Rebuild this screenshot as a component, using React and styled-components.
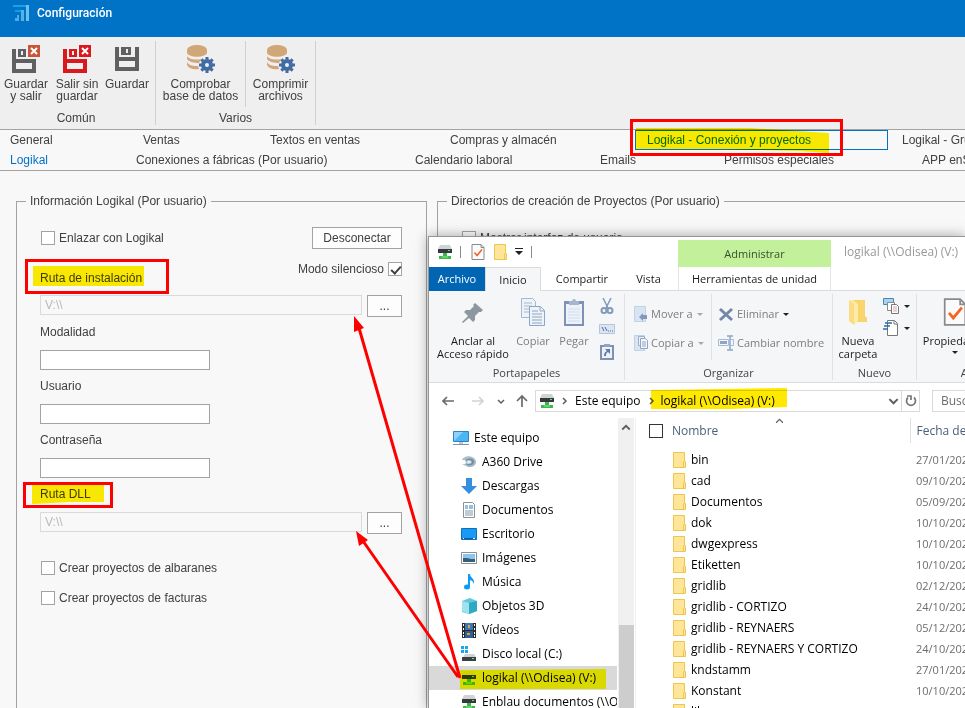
import React from "react";
import styled, { createGlobalStyle, css } from "styled-components";

const Global = createGlobalStyle`
  * { box-sizing: border-box; }
  html, body, #root { height: 100%; }
  body { margin: 0; overflow: hidden; }
  button, input { font: inherit; color: inherit; margin: 0; padding: 0; border-radius: 0; }
  button { background: none; border: 0; cursor: pointer; }
  svg { display: block; flex: none; }
`;

const appFont = `"Liberation Sans", Arial, sans-serif`;
const shellFont = `"Open Sans", "Segoe UI", sans-serif`;

/* ---------- Configuration window ---------- */

const Screen = styled.div`
  position: relative;
  height: 100vh;
  overflow: hidden;
  display: flex;
  flex-direction: column;
  background: #f8f8f8;
  color: #404040;
  font: 12px/16px ${appFont};
`;

const TitleBar = styled.header`
  flex: none;
  height: 37px;
  padding: 5px 13px;
  display: flex;
  align-items: flex-start;
  gap: 8px;
  background: #0173c7;
  color: #fff;
`;

const WindowTitle = styled.h1`
  margin: 0;
  font: 500 12px/16px Roboto, ${appFont};
`;

const Ribbon = styled.div`
  flex: none;
  height: 93px;
  padding: 4px 0;
  display: flex;
  background: #efefef;
  border-bottom: 1px solid #a3a3a3;
`;

const RibbonGroup = styled.section`
  display: flex;
  flex-direction: column;
  justify-content: space-between;
  padding-right: ${(p) => p.$end || 0}px;
  border-right: 1px solid #d0d0d0;
`;

const RibbonButtons = styled.div`
  display: flex;
  height: 66px;
`;

const RibbonButton = styled.button`
  width: ${(p) => p.$width}px;
  padding-top: 4px;
  display: flex;
  flex-direction: column;
  align-items: center;
  gap: 5px;
  line-height: 12px;
  white-space: pre;
  border-right: ${(p) => (p.$divided ? "1px solid #d0d0d0" : "0")};
`;

const RibbonCaption = styled.div`
  text-align: center;
  line-height: 14px;
`;

const TabStrip = styled.nav`
  flex: none;
  height: 41px;
  border-bottom: 1px solid #a3a3a3;
`;

const TabLine = styled.div`
  display: flex;
  height: 20px;
  padding-left: 10px;
`;

const Tab = styled.button`
  flex: none;
  width: ${(p) => p.$width}px;
  text-align: left;
  white-space: nowrap;
  ${(p) => p.$current && css`color: #0173c7;`}
  ${(p) => p.$focused && css`
    color: #0173c7;
    border: 1px solid #0173c7;
    padding-left: 11px;
    margin-right: 14px;
  `}
`;

const Body = styled.main`
  flex: 1;
  min-height: 0;
  display: flex;
  gap: 10px;
  padding: 22px 0 0 16px;
`;

const Group = styled.fieldset`
  flex: ${(p) => (p.$wide ? "1 0 528px" : "0 0 411px")};
  min-width: 0;
  margin: 0;
  padding: 0 9px;
  border: 1px solid #a3a3a3;
  border-bottom: 0;
  ${(p) => p.$wide && css`border-right: 0;`}
`;

const Legend = styled.legend`
  padding: 0 4px;
`;

const Form = styled.div`
  padding: 18px 15px 0 14px;
  display: flex;
  flex-direction: column;
`;

const Row = styled.div`
  display: flex;
  justify-content: space-between;
  align-items: center;
  height: 22px;
`;

const PathHeading = styled.div`
  display: flex;
  justify-content: space-between;
  align-items: center;
  height: 34px;
  margin-top: 12px;
`;

const CheckLabel = styled.label`
  display: flex;
  align-items: center;
  gap: 4px;
  padding-left: 1px;
  ${(p) => p.$top && css`align-self: flex-start;`}
`;

const CheckBox = styled.input.attrs({ type: "checkbox" })`
  appearance: none;
  position: relative;
  flex: none;
  width: 14px;
  height: 14px;
  border: 1px solid #a3a3a3;
  background: #fff;
  &:checked::after {
    content: "";
    position: absolute;
    left: 4px;
    top: 1px;
    width: 4px;
    height: 8px;
    border: solid #404040;
    border-width: 0 2px 2px 0;
    transform: rotate(42deg);
  }
`;

const PushButton = styled.button`
  width: ${(p) => p.$width}px;
  height: 22px;
  border: 1px solid #a3a3a3;
  background: #fdfdfd;
`;

const PathRow = styled.div`
  display: flex;
  align-items: flex-start;
  gap: 5px;
  height: 21px;
`;

const TextInput = styled.input`
  width: 170px;
  height: 20px;
  padding: 0 4px;
  border: 1px solid #a3a3a3;
  background: #fff;
`;

const PathInput = styled(TextInput)`
  flex: 1;
  min-width: 0;
  border-color: #dadada;
  background: #f8f8f8;
  color: #b9b9b9;
`;

const FieldLabel = styled.label`
  margin: 8px 0 10px;
`;

const Options = styled.div`
  display: flex;
  flex-direction: column;
  gap: 14px;
  margin-top: 27px;
`;

/* ---------- File explorer window ---------- */

const Explorer = styled.section`
  position: absolute;
  left: 428px;
  top: 236px;
  right: 0;
  bottom: 0;
  overflow: hidden;
  display: flex;
  flex-direction: column;
  background: #fff;
  color: #1b1b1b;
  border: solid #959595;
  border-width: 1px 0 0 1px;
  box-shadow: 0 0 12px rgba(0, 0, 0, 0.35);
  font: 12px/16px ${shellFont};
  white-space: nowrap;
`;

const ExplorerHead = styled.div`
  flex: none;
  display: flex;
  height: 54px;
  border-bottom: 1px solid #dadbdc;
`;

const HeadLeft = styled.div`
  flex: none;
  width: 249px;
`;

const QuickBar = styled.div`
  display: flex;
  align-items: center;
  height: 30px;
  padding-left: 8px;
`;

const QuickButton = styled.button`
  display: grid;
  place-items: center;
  width: ${(p) => p.$width || 16}px;
`;

const QuickLine = styled.span`
  width: 1px;
  height: 12px;
  margin: 0 ${(p) => p.$gap}px;
  background: #8c8c8c;
`;

const ShellTabs = styled.div`
  display: flex;
  height: 24px;
  font-size: 11px;
`;

const ShellTab = styled.button`
  width: ${(p) => p.$width}px;
  height: 24px;
  ${(p) => p.$kind === "file" && css`background: #0066b4; color: #fff;`}
  ${(p) => p.$kind === "open" && css`
    background: #f5f6f7;
    border: 1px solid #dadbdc;
    border-bottom: 0;
  `}
`;

const Contextual = styled.div`
  flex: none;
  width: 153px;
  padding-top: 3px;
  text-align: center;
  font-size: 11px;
`;

const ContextTitle = styled.div`
  height: 27px;
  line-height: 28px;
  background: #c3f09b;
  color: #37502b;
`;

const ContextTab = styled.button`
  width: 100%;
  height: 23px;
  border: 1px solid #e4e4e4;
  border-width: 0 1px;
`;

const ExplorerTitle = styled.div`
  padding: 7px 13px;
  color: #999;
`;

const Tools = styled.div`
  flex: none;
  display: flex;
  height: 92px;
  background: #f5f6f7;
  border-bottom: 1px solid #dadbdc;
  font-size: 11px;
`;

const ToolGroup = styled.section`
  flex: none;
  width: ${(p) => p.$width}px;
  margin: 3px 0 2px;
  display: flex;
  flex-direction: column;
  justify-content: space-between;
  border-right: 1px solid #e0e1e2;
`;

const ToolBody = styled.div`
  display: flex;
  height: 66px;
`;

const ToolCaption = styled.div`
  text-align: center;
  line-height: 14px;
  color: #444;
`;

const BigTool = styled.button`
  flex: none;
  width: ${(p) => p.$width}px;
  padding-top: 4px;
  display: flex;
  flex-direction: column;
  align-items: center;
  gap: 8px;
  line-height: 13px;
  white-space: pre;
  color: ${(p) => (p.$dim ? "#7d7d7d" : "#1b1b1b")};
`;

const CaretLabel = styled.span`
  display: flex;
  flex-direction: column;
  align-items: center;
  gap: 1px;
`;

const SmallStack = styled.div`
  display: flex;
  flex-direction: column;
  gap: ${(p) => p.$gap}px;
  padding: ${(p) => p.$pad};
  ${(p) => p.$width && css`
    width: ${p.$width}px;
    border-right: 1px solid #e0e1e2;
  `}
`;

const SmallTool = styled.button`
  display: flex;
  align-items: center;
  gap: 3px;
  height: 16px;
  color: #7d7d7d;
`;

const NavBar = styled.div`
  flex: none;
  display: flex;
  align-items: center;
  height: 35px;
  padding-left: 12px;
`;

const NavButton = styled.button`
  flex: none;
  display: grid;
  place-items: center;
  width: ${(p) => p.$width}px;
  height: 22px;
  margin-left: ${(p) => p.$gap || 0}px;
`;

const Address = styled.div`
  flex: 0 0 385px;
  height: 22px;
  margin-left: 5px;
  padding-left: 3px;
  display: flex;
  align-items: center;
  border: 1px solid #d9d9d9;
  color: #000;
`;

const Crumb = styled.button`
  padding: 0 3px;
`;

const Refresh = styled(NavButton)`
  border-left: 1px solid #d9d9d9;
`;

const Spacer = styled.span`
  flex: 1;
`;

const Search = styled.input`
  flex: 0 0 160px;
  height: 22px;
  margin-left: 12px;
  padding: 0 8px;
  border: 1px solid #d9d9d9;
  &::placeholder { color: #6d6d6d; opacity: 1; }
`;

const Panes = styled.div`
  flex: 1;
  min-height: 0;
  display: flex;
`;

const Tree = styled.ul`
  flex: 0 0 188px;
  margin: 0;
  padding: 8px 0 0;
  list-style: none;
  overflow: hidden;
  color: #000;
`;

const TreeItem = styled.li`
  display: flex;
  align-items: center;
  gap: 5px;
  height: 24px;
  padding-left: ${(p) => (p.$root ? 24 : 32)}px;
  background: ${(p) => (p.$selected ? "#d9d9d9" : "transparent")};
`;

const ScrollTrack = styled.div`
  flex: 0 0 16px;
  margin-left: 1px;
  display: flex;
  flex-direction: column;
  align-items: center;
  justify-content: space-between;
  padding-top: 4px;
  background: #f0f0f0;
`;

const ScrollThumb = styled.div`
  width: 15px;
  height: 83px;
  background: #cdcdcd;
`;

const Listing = styled.div`
  position: relative;
  flex: 1;
  min-width: 0;
  margin-left: 1px;
  overflow: hidden;
  border-left: 1px solid #f0f0f0;
`;

const FileTable = styled.table`
  width: 480px;
  table-layout: fixed;
  border-collapse: collapse;
  text-align: left;
`;

const HeadCell = styled.th`
  width: ${(p) => p.$width}px;
  height: 25px;
  padding: 0 0 0 ${(p) => p.$pad}px;
  font-weight: 400;
  color: #4c607a;
  ${(p) => p.$line && css`border-right: 1px solid #e0e0e0;`}
`;

const NameHead = styled.div`
  display: flex;
  align-items: center;
  gap: 9px;
`;

const SelectAll = styled(CheckBox)`
  border-color: #333;
`;

const SortMark = styled.span`
  position: absolute;
  left: 139px;
  top: -2px;
`;

const SpacerRow = styled.tr`
  height: 6px;
`;

const Cell = styled.td`
  height: 21px;
  padding: 0 0 0 ${(p) => p.$pad}px;
  color: #000;
  ${(p) => p.$date && css`color: #6d6d6d; font-size: 11px;`}
`;

const FileName = styled.div`
  display: flex;
  align-items: center;
  gap: 5px;
`;

/* ---------- Annotations over both windows ---------- */

const MarkerLayer = styled.svg`
  position: absolute;
  inset: 0;
  width: 100%;
  height: 100%;
  pointer-events: none;
  ${(p) => p.$multiply && css`mix-blend-mode: multiply;`}
`;

/* ---------- Icons ---------- */

const Logo = () => (
  <svg width="16" height="16" viewBox="0 0 16 16">
    <path d="M0 0h16v2H0z" fill="#16a3e6" />
    <path d="M13 0h3v16h-3z" fill="#6fc0ea" />
    <path d="M2 5h9v2H2z" fill="#109fe4" />
    <path d="M8 5h3v11H8z" fill="#56b2e4" />
    <path d="M4 10h2v6H2v-3h2z" fill="#4aade3" />
  </svg>
);

const Floppy = ({ color = "#606060", badge }) => (
  <svg width="28" height="28" viewBox="0 0 28 28">
    <g transform={badge ? undefined : "translate(2 -2)"}>
      <path
        fillRule="evenodd"
        fill={color}
        d={
          badge
            ? "M0 4h4v10h20v14H0zM4 18v6h16v-6z"
            : "M0 4h4v10h16V4h4v24H0zM4 18v6h16v-6z"
        }
      />
      <path fillRule="evenodd" fill={color} d={badge ? "M6 4h8v8H6zM9 6v4h2V6z" : "M6 4h10v8H6zM11 6v4h2V6z"} />
    </g>
    {badge && (
      <>
        <path d="M16 0h12v12H16z" fill={badge} />
        <path d="M19 3l6 6M25 3l-6 6" stroke="#fff" strokeWidth="2" />
      </>
    )}
  </svg>
);

const teeth = [0, 45, 90, 135, 180, 225, 270, 315];

const Database = () => (
  <svg width="28" height="28" viewBox="0 0 28 28">
    <g fill="#d2a777">
      <ellipse cx="10" cy="5" rx="10" ry="5" />
      <path d="M0 5h20v3c-2 5-18 5-20 0z" />
      <path d="M0 11c2 4 11 4 14 3l-2 4c-5 0-10-1-12-4z" />
      <path d="M0 17c2 4 7 4 11 4l1 3c-5 1-10 0-12-4z" />
    </g>
    <g fill="#426da3" transform="translate(20 20)">
      <circle r="6" />
      {teeth.map((a) => (
        <rect key={a} x="-1.500" y="-8" width="3" height="4" transform={`rotate(${a})`} />
      ))}
      <circle r="2" fill="#efefef" />
    </g>
  </svg>
);

const Drive = () => (
  <svg width="16" height="16" viewBox="0 0 16 16">
    <path d="M3 1h10l2 4H1z" fill="#d0d3d5" />
    <path d="M1 5h14v4H1z" fill="#34393c" />
    <path d="M11 6h2v1h-2z" fill="#5fe36a" />
    <path d="M6 9h4v3h4v3H2v-3h4z" fill="#3fb54b" />
    <path d="M5 12h6v2H5z" fill="#5ed667" />
  </svg>
);

const CheckDoc = ({ w = 14, h = 16 }) => (
  <svg width={w} height={h} viewBox="0 0 14 16">
    <path d="M1 .5h9l3 3v12H1z" fill="#fbfbfb" stroke="#8a8a8a" />
    <path d="M10 .5v3h3" fill="none" stroke="#8a8a8a" />
    <path d="M3.500 8.500l2.500 3 5-6" fill="none" stroke="#f26522" strokeWidth="1.600" />
  </svg>
);

const Folder = () => (
  <svg width="13" height="16" viewBox="0 0 13 16">
    <path d="M.5.5h11v9h1v6H.5z" fill="#ffe597" stroke="#ecc64f" />
    <path d="M10.500 9.500v6" stroke="#ecc64f" />
  </svg>
);

const OpenFolder = () => (
  <svg width="20" height="28" viewBox="0 0 20 28">
    <path d="M5 2h12v16l2 2v4H5z" fill="#f9d36b" />
    <path d="M1 2l5 3v22l-5-4z" fill="#fbdc80" />
    <path d="M1 2h4l5 4v17l-4 4V6z" fill="#ffe9a8" />
  </svg>
);

const Caret = ({ color = "#222", bar }) => (
  <svg width="8" height="8" viewBox="0 0 8 8">
    {bar && <path d="M0 0h8v1H0z" fill={color} />}
    <path d={bar ? "M0 3h8l-4 4z" : "M1 3h6L4 6z"} fill={color} />
  </svg>
);

const Pin = () => (
  <svg width="22" height="28" viewBox="0 0 22 28">
    <path transform="translate(0 2)" d="M13 3l8 7-2 2h-2l-4 4v4l-2 2-4-4-6 5-1-1 6-6-4-4 2-2h4l4-4-1-1z" fill="#8e979f" />
  </svg>
);

const CopyDocs = () => (
  <svg width="26" height="28" viewBox="0 0 26 28">
    <g fill="#eef3fa" stroke="#a6b8d2">
      <path d="M1.500.5h11l3 3v16h-14z" />
      <path d="M4 5h8M4 8h8M4 11h8M4 14h8" />
      <path d="M9.500 8.500h11l4 4v15h-15z" stroke="#8fa5c6" />
      <path d="M20 9v4h4M12 13h6M12 16h10M12 19h10M12 22h10M12 25h10" stroke="#8fa5c6" />
    </g>
  </svg>
);

const Clipboard = () => (
  <svg width="22" height="28" viewBox="0 0 22 28">
    <path d="M1 3h20v25H1z" fill="#7d92b6" />
    <path d="M3 6h16v20H3z" fill="#edf2fa" />
    <path d="M5 11h12M5 14h12M5 17h12M5 20h12M5 23h12" stroke="#cfdcee" />
    <path d="M6 3h3a2 2 0 0 1 4 0h3v4H6z" fill="#a9b6ca" />
  </svg>
);

const Scissors = () => (
  <svg width="16" height="16" viewBox="0 0 16 16" fill="none" stroke="#8499bb">
    <path d="M4 0l5 10M12 0L7 10" strokeWidth="1.500" />
    <circle cx="5" cy="12.500" r="2.500" strokeWidth="2" />
    <circle cx="11" cy="12.500" r="2.500" strokeWidth="2" />
  </svg>
);

const CopyPath = () => (
  <svg width="16" height="10" viewBox="0 0 16 10">
    <path d="M.5.5h15v9H.5z" fill="#dbe6f4" stroke="#b4c5dc" />
    <path d="M3 3l2 4M6 3l2 4M9 7h1M11 7h1M13 7h1" stroke="#536c94" fill="none" />
  </svg>
);

const PasteLink = () => (
  <svg width="16" height="16" viewBox="0 0 16 16">
    <path d="M1 1h14v15H1z" fill="#7d92b6" />
    <path d="M3 3h10v11H3z" fill="#edf2fa" />
    <path d="M5 0h6v3H5z" fill="#93a5c2" />
    <path d="M6 5h5v5l-2-2c-2 1-2 2-2 4l-2 0c0-3 1-4 3-5z" fill="#5f7aa5" />
  </svg>
);

const MoveTo = () => (
  <svg width="14" height="16" viewBox="0 0 14 16">
    <path d="M.5.5h11v15H.5z" fill="#d9e4f3" stroke="#c3d1e5" />
    <path d="M5 11l4-4v2h4v4H9v2z" fill="#8398bd" />
  </svg>
);

const CopyTo = () => (
  <svg width="14" height="16" viewBox="0 0 14 16">
    <path d="M.5.5h10v15H.5z" fill="#d9e4f3" stroke="#c3d1e5" />
    <path d="M4.500 1.500h6v9h-6z" fill="#eef3fa" stroke="#9bb0cf" />
    <path d="M6.500 3.500h5l2 2v8h-7z" fill="#f3f6fb" stroke="#8fa5c6" />
    <path d="M8 7h4M8 9h4M8 11h4" stroke="#8fa5c6" />
  </svg>
);

const Cross = () => (
  <svg width="16" height="16" viewBox="0 0 16 16">
    <path d="M2 3l12 11M14 3L2 14" stroke="#7487ab" strokeWidth="3" />
  </svg>
);

const Rename = () => (
  <svg width="16" height="16" viewBox="0 0 16 16" fill="none">
    <path d="M.5 4.500h10v6H.5zM13 4.500h2.500v6H13" stroke="#a9bad3" />
    <path d="M2 6h7v3H2z" fill="#8fa5c6" />
    <path d="M9 1h6M9 15h6M12 1v14" stroke="#8fa5c6" strokeWidth="1.500" />
  </svg>
);

const NewItem = () => (
  <svg width="17" height="16" viewBox="0 0 17 16">
    <path d="M.5.5h10v6H.5z" fill="#a6d4f3" stroke="#4a86b5" />
    <path d="M4.500 4.500h7v8h-7z" fill="#fff" stroke="#8a8a8a" />
    <path d="M8.500 6.500h5l2 2v7h-7z" fill="#fff" stroke="#777" />
    <path d="M10 9h4M10 11h4M10 13h4" stroke="#d9a5a5" />
  </svg>
);

const EasyAccess = () => (
  <svg width="17" height="16" viewBox="0 0 17 16">
    <path d="M4.500.5h7l3 3v12h-10z" fill="#fff" stroke="#777" />
    <path d="M11 1v3h3" fill="none" stroke="#777" />
    <path d="M2 3h7M1 6h6M0 9h5" stroke="#2c6ea8" strokeWidth="1.500" />
  </svg>
);

const Arrow = ({ d, color = "#6a6a6a" }) => (
  <svg width="14" height="14" viewBox="0 0 14 14">
    <path d={d} fill="none" stroke={color} strokeWidth="1.700" />
  </svg>
);

const Chevron = ({ d, size = 8, color = "#5f5f5f", weight = 1.5 }) => (
  <svg width={size} height={size} viewBox="0 0 8 8">
    <path d={d} fill="none" stroke={color} strokeWidth={weight} />
  </svg>
);
const right = "M3 1l3 3-3 3";
const down = "M1 3l3 3 3-3";
const up = "M1 6l3-3 3 3";

const ReloadIcon = () => (
  <svg width="14" height="14" viewBox="0 0 14 14">
    <path d="M10 3.500a4.500 4.500 0 1 1-6 0" fill="none" stroke="#777" strokeWidth="1.700" />
    <path d="M3 2h4v4" fill="none" stroke="#777" strokeWidth="1.700" />
  </svg>
);

const treeIcons = {
  pc: (
    <>
      <path d="M.5 1.500h15v10H.5z" fill="#4cb5f5" stroke="#2a85c6" />
      <path d="M1 11L10 2H1z" fill="#8ad2fb" />
      <path d="M6 12h4v2H6z" fill="#bcc7cf" />
      <path d="M0 14h16v1H0z" fill="#7e93a3" />
    </>
  ),
  a360: (
    <>
      <path d="M1 6C3 1 13 1 15 7c1 5-6 8-10 5l-4-2c2 0 3 0 4-1 1-4-2-3-4-3z" fill="#a9bcc8" />
      <path d="M4 8c0-4 8-5 9-1 1 4-5 6-8 3 2 0 6 0 6-2S6 5 4 8z" fill="#6f8fa5" />
      <ellipse cx="8" cy="8" rx="2" ry="1.500" fill="#e3ebf0" />
    </>
  ),
  down: <path d="M5 0h6v8h5l-8 8-8-8h5z" fill="#348fe0" />,
  doc: (
    <>
      <path d="M2.500.5h9l2 2v13h-11z" fill="#fff" stroke="#8f8f8f" />
      <path d="M4 4h3M4 6h3M8 4h4M8 6h4" stroke="#2d83c4" />
      <path d="M4 9h8M4 11h8M4 13h8" stroke="#8099a8" />
    </>
  ),
  desk: (
    <>
      <path d="M.5 2.500h15v11H.5z" fill="#1a9af5" stroke="#0c70bd" />
      <path d="M1 12h14v1H1z" fill="#0b5a9a" />
      <path d="M2 12h1v1H2zM12 12h2v1h-2z" fill="#fff" />
    </>
  ),
  img: (
    <>
      <path d="M.5 2.500h15v11H.5z" fill="#fff" stroke="#8f8f8f" />
      <path d="M2 4h12v8H2z" fill="#8cc6ee" />
      <path d="M2 8l4 0 4 1h4v3H2z" fill="#35607c" />
    </>
  ),
  music: (
    <>
      <path d="M7 0h2c0 4 5 4 4 10-1-3-3-4-4-4v7H7z" fill="#0a9bf3" />
      <ellipse cx="6" cy="13" rx="3" ry="2.500" fill="#0a9bf3" />
    </>
  ),
  cube: (
    <>
      <path d="M1 3l8-3 7 3v10l-8 3-7-2z" fill="#5fc8dc" />
      <path d="M1 3l7 2v11l-7-3z" fill="#9fe3ee" />
      <path d="M8 5l8-2v10l-8 3z" fill="#2fa9c3" />
    </>
  ),
  video: (
    <>
      <path d="M1 1h14v15H1z" fill="#2b2b2b" />
      <path d="M4 1h8v7H4z" fill="#3d77b6" />
      <path d="M4 9h8v7H4z" fill="#2f5f97" />
      <path d="M7 3h2v3H7zM6 11h3v2H6z" fill="#d9a640" />
      <path d="M2 2h1v2H2zM2 6h1v2H2zM2 10h1v2H2zM2 13h1v2H2zM13 2h1v2h-1zM13 6h1v2h-1zM13 10h1v2h-1zM13 13h1v2h-1z" fill="#fff" />
    </>
  ),
  disk: (
    <>
      <path d="M0 0h3v3H0zM4 0h3v3H4zM0 4h3v3H0zM4 4h3v3H4z" fill="#16a8f0" />
      <path d="M4 8h9l2 3H2z" fill="#d0d3d5" />
      <path d="M1 11h14v4H1z" fill="#3a3f42" />
      <path d="M11 12h2v1h-2z" fill="#6fe37a" />
    </>
  ),
};

const TreeIcon = ({ name }) =>
  name === "drive" ? <Drive /> : (
    <svg width="16" height="16" viewBox="0 0 16 16">{treeIcons[name]}</svg>
  );

/* ---------- Data ---------- */

const tabLines = [
  [
    { text: "General", width: 133 },
    { text: "Ventas", width: 127 },
    { text: "Textos en ventas", width: 180 },
    { text: "Compras y almacén", width: 185 },
    { text: "Logikal - Conexión y proyectos", width: 253, focused: true },
    { text: "Logikal - Grupos", width: 110 },
  ],
  [
    { text: "Logikal", width: 126, current: true },
    { text: "Conexiones a fábricas (Por usuario)", width: 279 },
    { text: "Calendario laboral", width: 185 },
    { text: "Emails", width: 124 },
    { text: "Permisos especiales", width: 198 },
    { text: "APP enSITE", width: 90 },
  ],
];

const treeItems = [
  { text: "Este equipo", icon: "pc", root: true },
  { text: "A360 Drive", icon: "a360" },
  { text: "Descargas", icon: "down" },
  { text: "Documentos", icon: "doc" },
  { text: "Escritorio", icon: "desk" },
  { text: "Imágenes", icon: "img" },
  { text: "Música", icon: "music" },
  { text: "Objetos 3D", icon: "cube" },
  { text: "Vídeos", icon: "video" },
  { text: "Disco local (C:)", icon: "disk" },
  { text: "logikal (\\\\Odisea) (V:)", icon: "drive", selected: true },
  { text: "Enblau documentos (\\\\ODISEA)", icon: "drive" },
];

const files = [
  ["bin", "27/01/2022"],
  ["cad", "09/10/2020"],
  ["Documentos", "05/09/2022"],
  ["dok", "10/10/2020"],
  ["dwgexpress", "10/10/2020"],
  ["Etiketten", "10/10/2020"],
  ["gridlib", "02/12/2020"],
  ["gridlib - CORTIZO", "24/10/2020"],
  ["gridlib - REYNAERS", "05/12/2020"],
  ["gridlib - REYNAERS Y CORTIZO", "24/10/2020"],
  ["kndstamm", "27/01/2022"],
  ["Konstant", "10/10/2020"],
  ["lib", "09/09/2020"],
];

/* ---------- Parts ---------- */

function LogikalForm() {
  return (
    <Group>
      <Legend>Información Logikal (Por usuario)</Legend>
      <Form>
        <Row>
          <CheckLabel><CheckBox />Enlazar con Logikal</CheckLabel>
          <PushButton $width={90}>Desconectar</PushButton>
        </Row>
        <PathHeading>
          <label htmlFor="install">Ruta de instalación</label>
          <CheckLabel $top>Modo silencioso<CheckBox defaultChecked /></CheckLabel>
        </PathHeading>
        <PathRow>
          <PathInput id="install" defaultValue={"V:\\\\"} disabled />
          <PushButton $width={35} aria-label="Elegir ruta de instalación">...</PushButton>
        </PathRow>
        <FieldLabel htmlFor="mode">Modalidad</FieldLabel>
        <TextInput id="mode" />
        <FieldLabel htmlFor="user">Usuario</FieldLabel>
        <TextInput id="user" />
        <FieldLabel htmlFor="pass">Contraseña</FieldLabel>
        <TextInput id="pass" type="password" />
        <FieldLabel htmlFor="dll">Ruta DLL</FieldLabel>
        <PathRow>
          <PathInput id="dll" defaultValue={"V:\\\\"} disabled />
          <PushButton $width={35} aria-label="Elegir ruta DLL">...</PushButton>
        </PathRow>
        <Options>
          <CheckLabel><CheckBox />Crear proyectos de albaranes</CheckLabel>
          <CheckLabel><CheckBox />Crear proyectos de facturas</CheckLabel>
        </Options>
      </Form>
    </Group>
  );
}

function ExplorerRibbon() {
  return (
    <Tools>
      <ToolGroup $width={196}>
        <ToolBody>
          <BigTool $width={88}><Pin />{"Anclar al\nAcceso rápido"}</BigTool>
          <BigTool $width={32} $dim><CopyDocs />Copiar</BigTool>
          <BigTool $width={50} $dim><Clipboard />Pegar</BigTool>
          <SmallStack $gap={8} $pad="4px 0 0 0">
            <SmallTool aria-label="Cortar"><Scissors /></SmallTool>
            <SmallTool aria-label="Copiar ruta de acceso"><CopyPath /></SmallTool>
            <SmallTool aria-label="Pegar acceso directo"><PasteLink /></SmallTool>
          </SmallStack>
        </ToolBody>
        <ToolCaption>Portapapeles</ToolCaption>
      </ToolGroup>
      <ToolGroup $width={208}>
        <ToolBody>
          <SmallStack $gap={13} $pad="12px 0 0 9px" $width={87}>
            <SmallTool><MoveTo />Mover a<Caret color="#aaa" /></SmallTool>
            <SmallTool><CopyTo />Copiar a<Caret color="#aaa" /></SmallTool>
          </SmallStack>
          <SmallStack $gap={13} $pad="12px 0 0 6px">
            <SmallTool><Cross />Eliminar<Caret /></SmallTool>
            <SmallTool><Rename />Cambiar nombre</SmallTool>
          </SmallStack>
        </ToolBody>
        <ToolCaption>Organizar</ToolCaption>
      </ToolGroup>
      <ToolGroup $width={84}>
        <ToolBody>
          <BigTool $width={50}><OpenFolder />{"Nueva\ncarpeta"}</BigTool>
          <SmallStack $gap={6} $pad="4px 0 0 0">
            <SmallTool aria-label="Nuevo elemento"><NewItem /><Caret /></SmallTool>
            <SmallTool aria-label="Fácil acceso"><EasyAccess /><Caret /></SmallTool>
          </SmallStack>
        </ToolBody>
        <ToolCaption>Nuevo</ToolCaption>
      </ToolGroup>
      <ToolGroup $width={114}>
        <ToolBody>
          <BigTool $width={76}>
            <CheckDoc w={24} h={28} />
            <CaretLabel>Propiedades<Caret /></CaretLabel>
          </BigTool>
        </ToolBody>
        <ToolCaption>Abrir</ToolCaption>
      </ToolGroup>
    </Tools>
  );
}

function FileExplorer() {
  return (
    <Explorer>
      <ExplorerHead>
        <HeadLeft>
          <QuickBar>
            <Drive />
            <QuickLine $gap={7} />
            <QuickButton $width={20} aria-label="Propiedades"><CheckDoc /></QuickButton>
            <QuickButton $width={24} aria-label="Nueva carpeta"><Folder /></QuickButton>
            <QuickButton $width={14} aria-label="Personalizar"><Caret bar /></QuickButton>
            <QuickLine $gap={5} />
          </QuickBar>
          <ShellTabs>
            <ShellTab $width={56} $kind="file">Archivo</ShellTab>
            <ShellTab $width={56} $kind="open">Inicio</ShellTab>
            <ShellTab $width={82}>Compartir</ShellTab>
            <ShellTab $width={51}>Vista</ShellTab>
          </ShellTabs>
        </HeadLeft>
        <Contextual>
          <ContextTitle>Administrar</ContextTitle>
          <ContextTab>Herramientas de unidad</ContextTab>
        </Contextual>
        <ExplorerTitle>{"logikal (\\\\Odisea) (V:)"}</ExplorerTitle>
      </ExplorerHead>
      <ExplorerRibbon />
      <NavBar>
        <NavButton $width={14} aria-label="Atrás"><Arrow d="M13 7H2M6 3L2 7l4 4" /></NavButton>
        <NavButton $width={14} $gap={16} aria-label="Adelante"><Arrow color="#d2d2d2" d="M1 7h11M8 3l4 4-4 4" /></NavButton>
        <NavButton $width={16} $gap={8} aria-label="Recientes"><Chevron d={down} /></NavButton>
        <NavButton $width={16} $gap={5} aria-label="Subir"><Arrow d="M7 13V2M2 7l5-5 5 5" /></NavButton>
        <Address>
          <Drive />
          <NavButton $width={17} aria-label="Expandir"><Chevron d={right} /></NavButton>
          <Crumb>Este equipo</Crumb>
          <NavButton $width={14} aria-label="Expandir equipo"><Chevron d={right} /></NavButton>
          <Crumb>{"logikal (\\\\Odisea) (V:)"}</Crumb>
          <Spacer />
          <NavButton $width={16} aria-label="Historial"><Chevron d={down} size={11} /></NavButton>
          <Refresh $width={18} aria-label="Actualizar"><ReloadIcon /></Refresh>
        </Address>
        <Search type="search" aria-label="Buscar" placeholder="Buscar en logikal" />
      </NavBar>
      <Panes>
        <Tree>
          {treeItems.map((t) => (
            <TreeItem key={t.text} $root={t.root} $selected={t.selected}>
              <TreeIcon name={t.icon} />
              {t.text}
            </TreeItem>
          ))}
        </Tree>
        <ScrollTrack>
          <Chevron d={up} size={10} />
          <ScrollThumb />
        </ScrollTrack>
        <Listing>
          <FileTable>
            <thead>
              <tr>
                <HeadCell $width={274} $pad={13} $line>
                  <NameHead><SelectAll aria-label="Seleccionar todo" />Nombre</NameHead>
                </HeadCell>
                <HeadCell $pad={6}>Fecha de modificación</HeadCell>
              </tr>
            </thead>
            <tbody>
              <SpacerRow><td colSpan={2} /></SpacerRow>
              {files.map(([name, date]) => (
                <tr key={name}>
                  <Cell $pad={37}><FileName><Folder />{name}</FileName></Cell>
                  <Cell $pad={6} $date>{date}</Cell>
                </tr>
              ))}
            </tbody>
          </FileTable>
          <SortMark><Chevron d={up} size={9} weight={1} /></SortMark>
        </Listing>
      </Panes>
    </Explorer>
  );
}

export default function App() {
  return (
    <Screen>
      <Global />
      <TitleBar>
        <Logo />
        <WindowTitle>Configuración</WindowTitle>
      </TitleBar>
      <Ribbon>
        <RibbonGroup $end={3}>
          <RibbonButtons>
            <RibbonButton $width={52}><Floppy badge="#c8553a" />{"Guardar\ny salir"}</RibbonButton>
            <RibbonButton $width={50}><Floppy color="#d9191e" badge="#d9191e" />{"Salir sin\nguardar"}</RibbonButton>
            <RibbonButton $width={50}><Floppy />Guardar</RibbonButton>
          </RibbonButtons>
          <RibbonCaption>Común</RibbonCaption>
        </RibbonGroup>
        <RibbonGroup>
          <RibbonButtons>
            <RibbonButton $width={90} $divided><Database />{"Comprobar\nbase de datos"}</RibbonButton>
            <RibbonButton $width={69}><Database />{"Comprimir\narchivos"}</RibbonButton>
          </RibbonButtons>
          <RibbonCaption>Varios</RibbonCaption>
        </RibbonGroup>
      </Ribbon>
      <TabStrip>
        {tabLines.map((line, i) => (
          <TabLine key={i}>
            {line.map((t) => (
              <Tab key={t.text} $width={t.width} $current={t.current} $focused={t.focused}>{t.text}</Tab>
            ))}
          </TabLine>
        ))}
      </TabStrip>
      <Body>
        <LogikalForm />
        <Group $wide>
          <Legend>Directorios de creación de Proyectos (Por usuario)</Legend>
          <Form>
            <Row>
              <CheckLabel><CheckBox />Mostrar interfaz de usuario</CheckLabel>
            </Row>
          </Form>
        </Group>
      </Body>
      <FileExplorer />
      <MarkerLayer $multiply aria-hidden="true">
        <path d="M636 128H750L829 133V153L800 151L720 149H636z" fill="#ffee00" />
        <path d="M33 266H144V286H33z" fill="#ffee00" />
        <path d="M32 485H104V502L70 502L32 504z" fill="#ffee00" />
        <path d="M651 390L720 389L787 388V407L730 409H651z" fill="#ffe900" />
        <path d="M460 670L606 669V689H460z" fill="#ffff00" />
      </MarkerLayer>
      <MarkerLayer aria-hidden="true">
        <g fill="none" stroke="#f00" strokeWidth="3">
          <rect x="631.500" y="120.500" width="210" height="34" />
          <rect x="26.500" y="260.500" width="141" height="32" />
          <rect x="24.500" y="483.500" width="87" height="23" />
          <path d="M460 678L359 328M458 677L363 541" />
        </g>
        <path d="M354 316L364 328L354 332zM356 531L368 540L359 546z" fill="#f00" />
      </MarkerLayer>
    </Screen>
  );
}
